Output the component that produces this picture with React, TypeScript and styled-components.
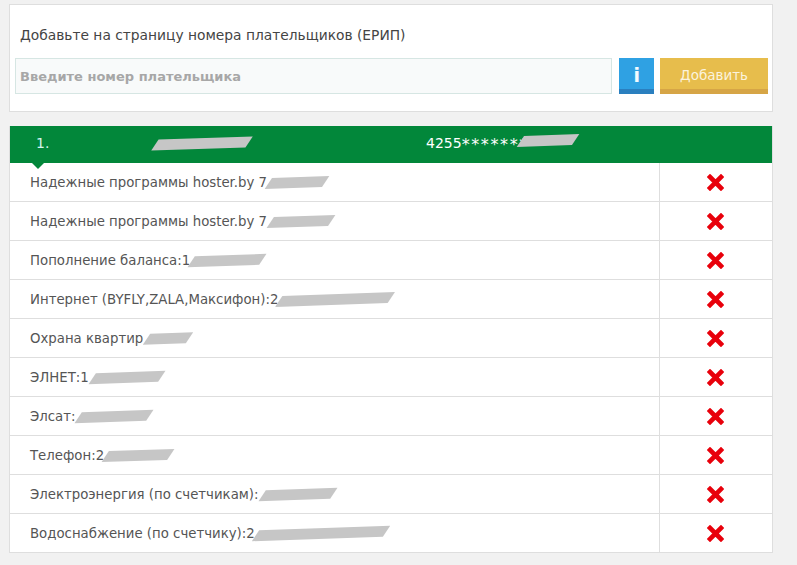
import React from "react";
import styled, { createGlobalStyle } from "styled-components";

const Global = createGlobalStyle`
  html, body { margin: 0; padding: 0; background: #f1f1f1; }
  body { font-family: "DejaVu Sans", Verdana, sans-serif; }
  * { box-sizing: border-box; }
`;

const Page = styled.div`
  width: 797px;
  height: 565px;
  padding: 4px 24px 0 9px;
  display: flex;
  flex-direction: column;
  gap: 14px;
`;

const Card = styled.div`
  background: #fff;
  border: 1px solid #dedede;
  padding: 19px 4px 17px 5px;
  display: flex;
  flex-direction: column;
  gap: 12px;
`;

const Title = styled.div`
  font-size: 13.8px;
  color: #444;
  padding-left: 5px;
  line-height: 22px;
`;

const FormRow = styled.div`
  display: flex;
  align-items: stretch;
  height: 36px;
`;

const Input = styled.input`
  width: 598px;
  height: 36px;
  border: 1px solid #d6e6e3;
  background: #f8fafa;
  font-family: inherit;
  font-size: 13px;
  font-weight: bold;
  padding: 0 4px;
  color: #444;
  outline: none;
  &::placeholder { color: #a7a7a7; }
`;

const Btn = styled.button<{ $bg: string; $edge: string; $w: number }>`
  width: ${(p) => p.$w}px;
  height: 36px;
  border: none;
  border-bottom: 5px solid ${(p) => p.$edge};
  background: ${(p) => p.$bg};
  color: #fff;
  font-family: inherit;
  font-size: 13.5px;
  padding: 2px 0 0;
  margin-left: ${(p) => (p.$w < 50 ? 7 : 6)}px;
  display: flex;
  align-items: center;
  justify-content: center;
`;

const InfoGlyph = styled.span`
  font-weight: bold;
  font-size: 19px;
  color: #f4fbff;
`;

const AddLabel = styled.span`
  color: #fbf3dc;
`;

const Table = styled.div`
  background: #fff;
  border: 1px solid #dedede;
  border-top: none;
  display: flex;
  flex-direction: column;
`;

const Header = styled.div`
  position: relative;
  height: 37px;
  background: #02873a;
  color: #fff;
  display: flex;
  align-items: center;
  font-size: 14px;
  padding-left: 26px;
  padding-bottom: 4px;
  &::after {
    content: "";
    position: absolute;
    left: 22px;
    bottom: -6px;
    border-left: 6px solid transparent;
    border-right: 6px solid transparent;
    border-top: 6px solid #02873a;
  }
`;

const Num = styled.span`
  color: #d4f4ef;
  width: 120px;
`;

const CardNo = styled.span`
  margin-left: 178px;
  display: inline-flex;
  align-items: center;
`;

const Stars = styled.span`
  font-size: 16px;
  letter-spacing: 1.6px;
  padding-top: 3px;
`;

const Blot = styled.span<{ $w: number; $ml?: number; $dy?: number }>`
  display: inline-block;
  width: ${(p) => p.$w}px;
  height: 11px;
  margin-left: ${(p) => p.$ml ?? 0}px;
  background: #c6c6c6;
  transform: translateY(${(p) => p.$dy ?? 0}px) skewX(-35deg) rotate(-2deg);
  vertical-align: middle;
`;

const Row = styled.div`
  display: grid;
  grid-template-columns: 650px 1fr;
  height: 39px;
  border-bottom: 1px solid #dedede;
  &:last-child { border-bottom: none; height: 38px; }
`;

const NameCell = styled.div`
  display: flex;
  align-items: center;
  padding-left: 20px;
  font-size: 13.3px;
  color: #555;
  white-space: nowrap;
  border-right: 1px solid #dedede;
`;

const ActionCell = styled.div`
  display: flex;
  align-items: center;
  justify-content: center;
  padding-right: 2px;
  padding-top: 1px;
`;

const Cross = () => (
  <svg width="17" height="17" viewBox="0 0 17 17">
    <path d="M3 3 L14 14 M14 3 L3 14" stroke="#e8000b" strokeWidth="4.6" strokeLinecap="square" />
  </svg>
);

const rows: { text: string; w: number; ml?: number }[] = [
  { text: "Надежные программы hoster.by 7", w: 56, ml: 2 },
  { text: "Надежные программы hoster.by 7", w: 60, ml: 4 },
  { text: "Пополнение баланса:1", w: 70, ml: 2 },
  { text: "Интернет (BYFLY,ZALA,Максифон):2", w: 110, ml: 2 },
  { text: "Охрана квартир", w: 42, ml: 4 },
  { text: "ЭЛНЕТ:1", w: 68, ml: 4 },
  { text: "Элсат:", w: 70, ml: 4 },
  { text: "Телефон:2", w: 64, ml: 2 },
  { text: "Электроэнергия (по счетчикам):", w: 70, ml: 4 },
  { text: "Водоснабжение (по счетчику):2", w: 128, ml: 2 },
];

export default function App() {
  return (
    <>
      <Global />
      <Page>
        <Card>
          <Title>Добавьте на страницу номера плательщиков (ЕРИП)</Title>
          <FormRow>
            <Input placeholder="Введите номер плательщика" />
            <Btn $bg="#2fa1e3" $edge="#2a7fbf" $w={35}>
              <InfoGlyph>i</InfoGlyph>
            </Btn>
            <Btn $bg="#e7bd4c" $edge="#d6a546" $w={108}>
              <AddLabel>Добавить</AddLabel>
            </Btn>
          </FormRow>
        </Card>
        <Table>
          <Header>
            <Num>1.</Num>
            <Blot $w={92} $dy={1} />
            <CardNo>
              4255<Stars>*******</Stars>
              <Blot $w={54} $ml={-8} $dy={-2} />
            </CardNo>
          </Header>
          {rows.map((r, i) => (
            <Row key={i}>
              <NameCell>
                {r.text}
                <Blot $w={r.w} $ml={r.ml} />
              </NameCell>
              <ActionCell>
                <Cross />
              </ActionCell>
            </Row>
          ))}
        </Table>
      </Page>
    </>
  );
}
